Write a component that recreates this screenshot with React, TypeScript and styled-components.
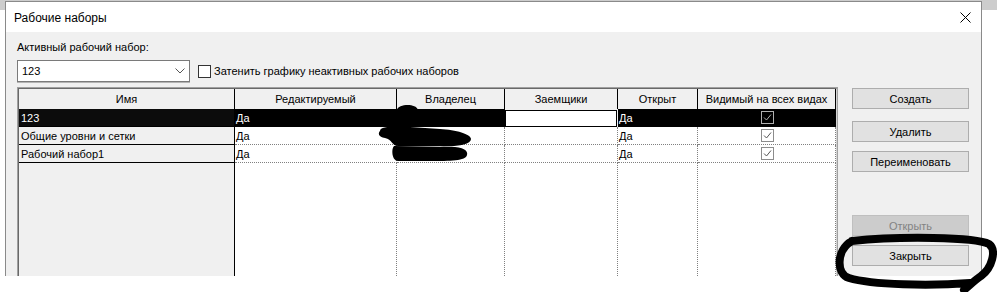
import styled, { createGlobalStyle } from 'styled-components';

const Global = createGlobalStyle`
    html, body {
        margin: 0;
        background: #fff;
    }
    body {
        font-family: "Liberation Sans", Arial, sans-serif;
        font-size: 11px;
        color: #000;
    }
`;

const Page = styled.div`
    position: relative;
    width: 997px;
    height: 292px;
    box-sizing: border-box;
    padding: 1px 15px 0 5px;
    overflow: hidden;
    background: linear-gradient(#cdcdcd 0 10px, #fff 10px);
`;

const Dialog = styled.div`
    height: 275px;
    box-sizing: border-box;
    border: 1px solid #8a8a8a;
    border-bottom: none;
    background: #f0f0f0;
    display: flex;
    flex-direction: column;
    overflow: hidden;
`;

const TitleBar = styled.div`
    height: 30px;
    flex: none;
    background: #fff;
    display: flex;
    align-items: center;
    justify-content: space-between;
    padding: 0 10px 0 8px;
`;

const Title = styled.span`
    font-size: 12px;
    margin-top: 1px;
`;

const Body = styled.div`
    flex: 1;
    display: flex;
    flex-direction: column;
    padding: 8px 11px 0 11px;
    min-height: 0;
`;

const Label = styled.div`
    height: 14px;
    line-height: 14px;
`;

const ComboRow = styled.div`
    margin-top: 6px;
    height: 22px;
    display: flex;
    align-items: center;
`;

const Combo = styled.div`
    width: 173px;
    height: 22px;
    box-sizing: border-box;
    border: 1px solid #7a7a7a;
    box-shadow: 0 1px 0 #b4b4b4;
    background: #fff;
    display: flex;
    align-items: center;
    justify-content: space-between;
    padding: 0 4px 0 4px;
`;

const CheckBox = styled.span<{ $light?: boolean; $sel?: boolean }>`
    width: 13px;
    height: 13px;
    box-sizing: border-box;
    border: 1px solid ${p => (p.$sel ? '#b0b0b0' : p.$light ? '#8c8c8c' : '#333')};
    background: ${p => (p.$light ? 'transparent' : '#fff')};
    color: ${p => (p.$sel ? '#b0b0b0' : '#555')};
    display: inline-flex;
    align-items: center;
    justify-content: center;
    flex: none;
`;

const CheckLabel = styled.label`
    margin-left: 8px;
    display: flex;
    align-items: center;
    gap: 3px;
`;

const Main = styled.div`
    margin-top: 5px;
    flex: 1;
    display: flex;
    gap: 14px;
    min-height: 0;
`;

const TableFrame = styled.div`
    width: 821px;
    box-sizing: border-box;
    border: 1px solid #a0a0a0;
    border-bottom: none;
    display: flex;
`;

const Grid = styled.div`
    flex: 1;
    border-top: 1px solid #696969;
    border-left: 1px solid #696969;
    border-right: 1px solid #d4d4d4;
    display: grid;
    grid-template-columns: 216px 162px 108px 113px 80px 138px;
    grid-template-rows: 20px 18px 18px 18px 1fr;
`;

const HeaderCell = styled.div`
    background: #f0f0f0;
    border-right: 1px solid #000;
    display: flex;
    align-items: center;
    justify-content: center;
    white-space: nowrap;
`;

const NameCell = styled.div<{ $sel?: boolean }>`
    background: ${p => (p.$sel ? '#0c0c0c' : '#f0f0f0')};
    color: ${p => (p.$sel ? '#fff' : '#000')};
    border-right: 1px solid #000;
    border-bottom: 1px solid #000;
    padding-left: 2px;
    display: flex;
    align-items: center;
    white-space: nowrap;
`;

const DataCell = styled.div<{ $sel?: boolean; $center?: boolean }>`
    background: ${p => (p.$sel ? '#000' : '#fff')};
    color: ${p => (p.$sel ? '#fff' : '#000')};
    border-right: 1px dotted ${p => (p.$sel ? '#000' : '#808080')};
    border-bottom: 1px dotted ${p => (p.$sel ? '#000' : '#808080')};
    padding-left: 1px;
    display: flex;
    align-items: center;
    justify-content: ${p => (p.$center ? 'center' : 'flex-start')};
    white-space: nowrap;
`;

const EditCell = styled.div`
    background: #fff;
    border: 1px solid #000;
    margin: 1px 1px 0 0;
`;

const NameFiller = styled.div`
    background: #f0f0f0;
    border-right: 1px solid #000;
`;

const DataFiller = styled.div`
    background: #fff;
    border-right: 1px dotted #808080;
`;

const Buttons = styled.div`
    width: 117px;
    display: flex;
    flex-direction: column;
    padding-top: 1px;
`;

const Button = styled.button<{ $gap: number }>`
    margin-top: ${p => p.$gap}px;
    height: 21px;
    padding: 0;
    font: inherit;
    color: #000;
    background: #e1e1e1;
    border: 1px solid #adadad;
    &:disabled {
        color: #838383;
        background: #cccccc;
        border-color: #bfbfbf;
    }
`;

const Overlay = styled.svg`
    position: absolute;
    left: 0;
    top: 0;
    pointer-events: none;
`;

const Check = () => (
    <svg width="11" height="11" viewBox="0 0 11 11">
        <path d="M2 5.5 L4.5 8 L9 2.5" fill="none" stroke="currentColor" strokeWidth="1" />
    </svg>
);

const rows = [
    { name: '123', sel: true },
    { name: 'Общие уровни и сетки' },
    { name: 'Рабочий набор1' },
];

const headers = ['Имя', 'Редактируемый', 'Владелец', 'Заемщики', 'Открыт', 'Видимый на всех видах'];

export default function App() {
    return (
        <>
            <Global />
            <Page>
                <Dialog>
                    <TitleBar>
                        <Title>Рабочие наборы</Title>
                        <svg width="11" height="11" viewBox="0 0 11 11">
                            <path d="M0.5 0.5 L10.5 10.5 M10.5 0.5 L0.5 10.5" stroke="#000" strokeWidth="1" />
                        </svg>
                    </TitleBar>
                    <Body>
                        <Label>Активный рабочий набор:</Label>
                        <ComboRow>
                            <Combo>
                                <span>123</span>
                                <svg width="10" height="6" viewBox="0 0 10 6">
                                    <path d="M0.5 0.5 L5 5 L9.5 0.5" fill="none" stroke="#555" strokeWidth="1" />
                                </svg>
                            </Combo>
                            <CheckLabel>
                                <CheckBox />
                                Затенить графику неактивных рабочих наборов
                            </CheckLabel>
                        </ComboRow>
                        <Main>
                            <TableFrame>
                                <Grid>
                                    {headers.map(h => (
                                        <HeaderCell key={h}>{h}</HeaderCell>
                                    ))}
                                    {rows.map(r => (
                                        <>
                                            <NameCell key={r.name} $sel={r.sel}>{r.name}</NameCell>
                                            <DataCell $sel={r.sel}>Да</DataCell>
                                            <DataCell $sel={r.sel} />
                                            {r.sel ? <EditCell /> : <DataCell />}
                                            <DataCell $sel={r.sel}>Да</DataCell>
                                            <DataCell $sel={r.sel} $center>
                                                <CheckBox $light $sel={r.sel}><Check /></CheckBox>
                                            </DataCell>
                                        </>
                                    ))}
                                    <NameFiller />
                                    <DataFiller />
                                    <DataFiller />
                                    <DataFiller />
                                    <DataFiller />
                                    <DataFiller />
                                </Grid>
                            </TableFrame>
                            <Buttons>
                                <Button $gap={0}>Создать</Button>
                                <Button $gap={12}>Удалить</Button>
                                <Button $gap={9}>Переименовать</Button>
                                <Button $gap={43} disabled>Открыть</Button>
                                <Button $gap={9}>Закрыть</Button>
                            </Buttons>
                        </Main>
                    </Body>
                </Dialog>
                <Overlay width="997" height="292" viewBox="0 0 997 292">
                    <path
                        d="M397 110 C398 104, 416 103, 418 110 Z
                           M380 131 C380 126, 395 126, 410 127 L440 129 C456 130, 471 134, 471 139 C471 145, 455 147, 440 146 L398 146 C392 146, 392 139, 385 138 C378 137, 378 133, 380 131 Z
                           M394 146 L455 147 C466 148, 468 152, 467 155 C466 161, 450 161, 430 161 L398 161 C392 161, 391 149, 394 146 Z"
                        fill="#000"
                    />
                    <path
                        d="M852 241 C900 236, 975 237, 989 244 C997 250, 992 268, 981 276 C975 280, 970 285, 964 290
                           M970 283 C930 286, 872 285, 849 278 C836 274, 836 250, 852 241"
                        fill="none"
                        stroke="#000"
                        strokeWidth="8"
                        strokeLinecap="round"
                        strokeLinejoin="round"
                    />
                </Overlay>
            </Page>
        </>
    );
}
